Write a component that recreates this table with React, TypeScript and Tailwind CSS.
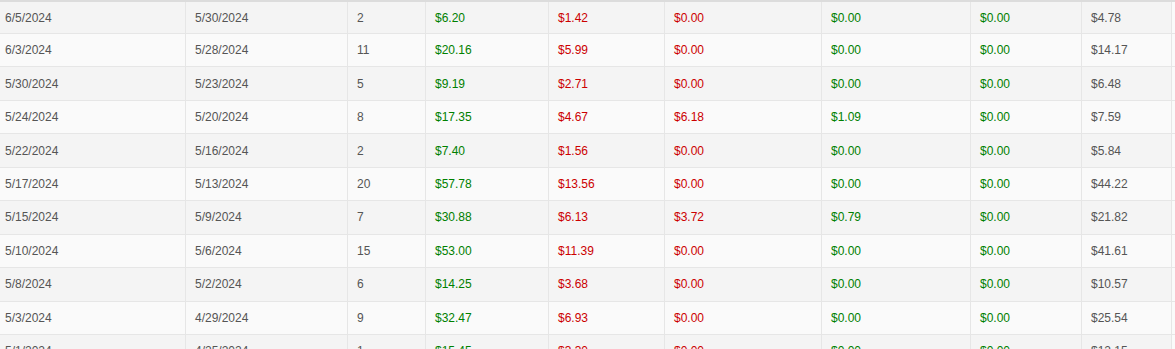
type Row = {
  paid: string;
  start: string;
  qty: string;
  gross: string;
  fee: string;
  refund: string;
  adj: string;
  bonus: string;
  net: string;
};

const rows: Row[] = [
  { paid: "6/5/2024", start: "5/30/2024", qty: "2", gross: "$6.20", fee: "$1.42", refund: "$0.00", adj: "$0.00", bonus: "$0.00", net: "$4.78" },
  { paid: "6/3/2024", start: "5/28/2024", qty: "11", gross: "$20.16", fee: "$5.99", refund: "$0.00", adj: "$0.00", bonus: "$0.00", net: "$14.17" },
  { paid: "5/30/2024", start: "5/23/2024", qty: "5", gross: "$9.19", fee: "$2.71", refund: "$0.00", adj: "$0.00", bonus: "$0.00", net: "$6.48" },
  { paid: "5/24/2024", start: "5/20/2024", qty: "8", gross: "$17.35", fee: "$4.67", refund: "$6.18", adj: "$1.09", bonus: "$0.00", net: "$7.59" },
  { paid: "5/22/2024", start: "5/16/2024", qty: "2", gross: "$7.40", fee: "$1.56", refund: "$0.00", adj: "$0.00", bonus: "$0.00", net: "$5.84" },
  { paid: "5/17/2024", start: "5/13/2024", qty: "20", gross: "$57.78", fee: "$13.56", refund: "$0.00", adj: "$0.00", bonus: "$0.00", net: "$44.22" },
  { paid: "5/15/2024", start: "5/9/2024", qty: "7", gross: "$30.88", fee: "$6.13", refund: "$3.72", adj: "$0.79", bonus: "$0.00", net: "$21.82" },
  { paid: "5/10/2024", start: "5/6/2024", qty: "15", gross: "$53.00", fee: "$11.39", refund: "$0.00", adj: "$0.00", bonus: "$0.00", net: "$41.61" },
  { paid: "5/8/2024", start: "5/2/2024", qty: "6", gross: "$14.25", fee: "$3.68", refund: "$0.00", adj: "$0.00", bonus: "$0.00", net: "$10.57" },
  { paid: "5/3/2024", start: "4/29/2024", qty: "9", gross: "$32.47", fee: "$6.93", refund: "$0.00", adj: "$0.00", bonus: "$0.00", net: "$25.54" },
  { paid: "5/1/2024", start: "4/25/2024", qty: "1", gross: "$15.45", fee: "$3.30", refund: "$0.00", adj: "$0.00", bonus: "$0.00", net: "$12.15" },
];

const cell = "flex items-center pl-[9px] border-l border-[#e6e6e6] whitespace-nowrap";

export default function App() {
  return (
    <div className="w-[1175px] h-[349px] overflow-hidden bg-[#fafafa] text-[12px] text-[#555] font-['Liberation_Sans',Arial,sans-serif]">
      <div className="border-t-2 border-[#dcdcdc]">
        {rows.map((r, i) => (
          <div
            key={i}
            className={`grid grid-cols-[185px_162px_78px_123px_116px_157px_149px_111px_90px_1fr] border-b border-[#e6e6e6] ${
              i === 0 ? "h-[32px]" : "h-[33.44px]"
            } ${i % 2 === 0 ? "bg-[#f4f4f4]" : "bg-[#fafafa]"}`}
          >
            {/* first column is scrolled a few px off the left edge */}
            <div className="flex items-center pl-[5px] whitespace-nowrap">{r.paid}</div>
            <div className={cell}>{r.start}</div>
            <div className={cell}>{r.qty}</div>
            <div className={`${cell} text-[#008000]`}>{r.gross}</div>
            <div className={`${cell} text-[#cc0000]`}>{r.fee}</div>
            <div className={`${cell} text-[#cc0000]`}>{r.refund}</div>
            <div className={`${cell} text-[#008000]`}>{r.adj}</div>
            <div className={`${cell} text-[#008000]`}>{r.bonus}</div>
            <div className={cell}>{r.net}</div>
            <div className="border-l border-[#e6e6e6] bg-[#fafafa]" />
          </div>
        ))}
      </div>
    </div>
  );
}
